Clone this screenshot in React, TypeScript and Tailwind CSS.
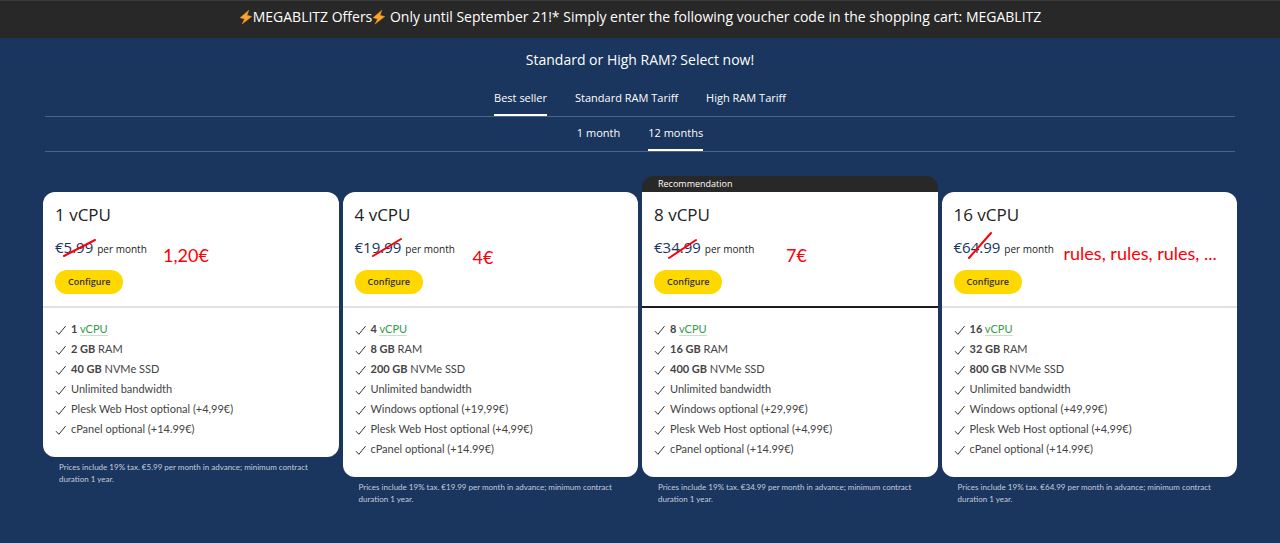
import type { ReactNode } from "react";

type Line = { x: number; y: number; w: number; h: number };

type Plan = {
  cpu: string;
  ram: string;
  disk: string;
  price: string;
  windows?: string;
  recommended?: boolean;
  note: string;
  notePlace: string;
  stroke: Line;
};

const plans: Plan[] = [
  { cpu: "1", ram: "2 GB", disk: "40 GB", price: "5.99", note: "1,20€", notePlace: "left-[108px] top-2", stroke: { x: 9, y: 3, w: 31, h: 16 } },
  { cpu: "4", ram: "8 GB", disk: "200 GB", price: "19.99", windows: "19,99€", note: "4€", notePlace: "left-[118px] top-2.5", stroke: { x: 18, y: 2, w: 28, h: 17 } },
  { cpu: "8", ram: "16 GB", disk: "400 GB", price: "34.99", windows: "29,99€", recommended: true, note: "7€", notePlace: "left-[132px] top-2", stroke: { x: 15, y: 3, w: 27, h: 18 } },
  { cpu: "16", ram: "32 GB", disk: "800 GB", price: "64.99", windows: "49,99€", note: "rules, rules, rules, ...", notePlace: "left-[110px] top-1.5", stroke: { x: 15, y: -4, w: 22, h: 25 } },
];

function Bolt() {
  return (
    <svg viewBox="0 0 14 16" className="inline-block h-4 w-3.5 align-[-3px]" aria-hidden="true">
      <path d="M9.8 1.2 1.1 8.7l4.4 1.2-2.4 5.2 9.7-7.5-4.7-1.3z" fill="#fba52b" stroke="#e58a1c" strokeWidth=".5" strokeLinejoin="round" />
    </svg>
  );
}

function Feature({ children }: { children: ReactNode }) {
  return (
    <li className="flex h-5 items-center gap-1">
      <svg viewBox="0 0 12 12" className="mt-0.5 size-3 shrink-0" fill="none" stroke="#333" strokeWidth="1" aria-hidden="true">
        <path d="M1 7.2 3.9 10.3 10.5 2.2" />
      </svg>
      <span>{children}</span>
    </li>
  );
}

function Tabs({ label, items, active }: { label: string; items: string[]; active: string }) {
  return (
    <nav aria-label={label} className="mx-[45px] flex justify-center gap-7 border-b border-[#4c648a]">
      {items.map((item) => (
        <button
          key={item}
          type="button"
          className={
            item === active
              ? "border-b-2 border-white pb-1 text-[11px] leading-6 font-medium"
              : "border-b-2 border-transparent pb-1 text-[11px] leading-6 font-medium"
          }
        >
          {item}
        </button>
      ))}
    </nav>
  );
}

function PlanCard({ plan }: { plan: Plan }) {
  const s = plan.stroke;
  return (
    <section>
      {plan.recommended ? (
        <div className="h-4 rounded-t-xl bg-[#282828] px-4 text-[9px] leading-4 font-medium">Recommendation</div>
      ) : (
        <div className="h-4" />
      )}
      <div
        className={
          plan.recommended
            ? "rounded-b-xl bg-white text-[#222]"
            : "rounded-xl bg-white text-[#222]"
        }
      >
        <div className={plan.recommended ? "border-b-2 border-[#1c1c1c] p-3" : "border-b-2 border-[#e2e2e2] p-3"}>
          <h2 className="text-[17px] leading-[22px]">{`${plan.cpu} vCPU`}</h2>
          <div className="relative mt-[11px] flex h-[21px] items-baseline gap-1 leading-5">
            <span className="text-[15px] font-medium text-[#1a355e]">{`€${plan.price}`}</span>
            <span className="text-[10px] font-medium">per month</span>
            <svg
              className="absolute overflow-visible"
              style={{ left: s.x, top: s.y, width: s.w, height: s.h }}
              viewBox={`0 0 ${s.w} ${s.h}`}
              aria-hidden="true"
            >
              <line x1="0" y1={s.h} x2={s.w} y2="0" stroke="#fb0007" strokeWidth="2" strokeLinecap="round" />
            </svg>
            <span className={`absolute font-[Lato,sans-serif] text-[18px] leading-5 whitespace-nowrap text-[#fb0007] ${plan.notePlace}`}>
              {plan.note}
            </span>
          </div>
          <button type="button" className="mt-3 block h-6 rounded-full bg-[#ffd800] px-[13px] text-[9px] leading-6 font-semibold text-[#333]">
            Configure
          </button>
        </div>
        <ul className="px-3 pt-[11px] pb-[18px] font-[Lato,sans-serif] text-[11px] leading-5 text-[#444]">
          <Feature>
            <b>{plan.cpu}</b> <a href="#vcpu" className="border-b border-[#c5e3ca] text-[#38994a]">vCPU</a>
          </Feature>
          <Feature><b>{plan.ram}</b> RAM</Feature>
          <Feature><b>{plan.disk}</b> NVMe SSD</Feature>
          <Feature>Unlimited bandwidth</Feature>
          {plan.windows && <Feature>{`Windows optional (+${plan.windows})`}</Feature>}
          <Feature>Plesk Web Host optional (+4,99€)</Feature>
          <Feature>cPanel optional (+14.99€)</Feature>
        </ul>
      </div>
      <p className="mt-1 px-4 font-[Lato,sans-serif] text-[8px] leading-3 text-[#c5cddb]">
        {`Prices include 19% tax. €${plan.price} per month in advance; minimum contract duration 1 year.`}
      </p>
    </section>
  );
}

export default function App() {
  return (
    <div className="min-h-screen bg-[#1a355e] font-['Open_Sans',sans-serif] text-white">
      <header className="border-t border-[#3b3b3b] bg-[#282828] pt-1.5 pb-[11px] text-center text-[14px] leading-5 font-medium">
        <Bolt />MEGABLITZ Offers<Bolt /> Only until September 21!* Simply enter the following voucher code in the shopping cart: MEGABLITZ
      </header>
      <main>
        <h1 className="mb-4 pt-3 text-center text-[14px] leading-5 font-medium">Standard or High RAM? Select now!</h1>
        <Tabs label="Tariff" items={["Best seller", "Standard RAM Tariff", "High RAM Tariff"]} active="Best seller" />
        <div className="pt-1">
          <Tabs label="Contract period" items={["1 month", "12 months"]} active="12 months" />
        </div>
        <div className="grid grid-cols-1 items-start gap-1 px-[43px] pt-6 sm:grid-cols-2 lg:grid-cols-4">
          {plans.map((plan) => (
            <PlanCard key={plan.cpu} plan={plan} />
          ))}
        </div>
      </main>
    </div>
  );
}
